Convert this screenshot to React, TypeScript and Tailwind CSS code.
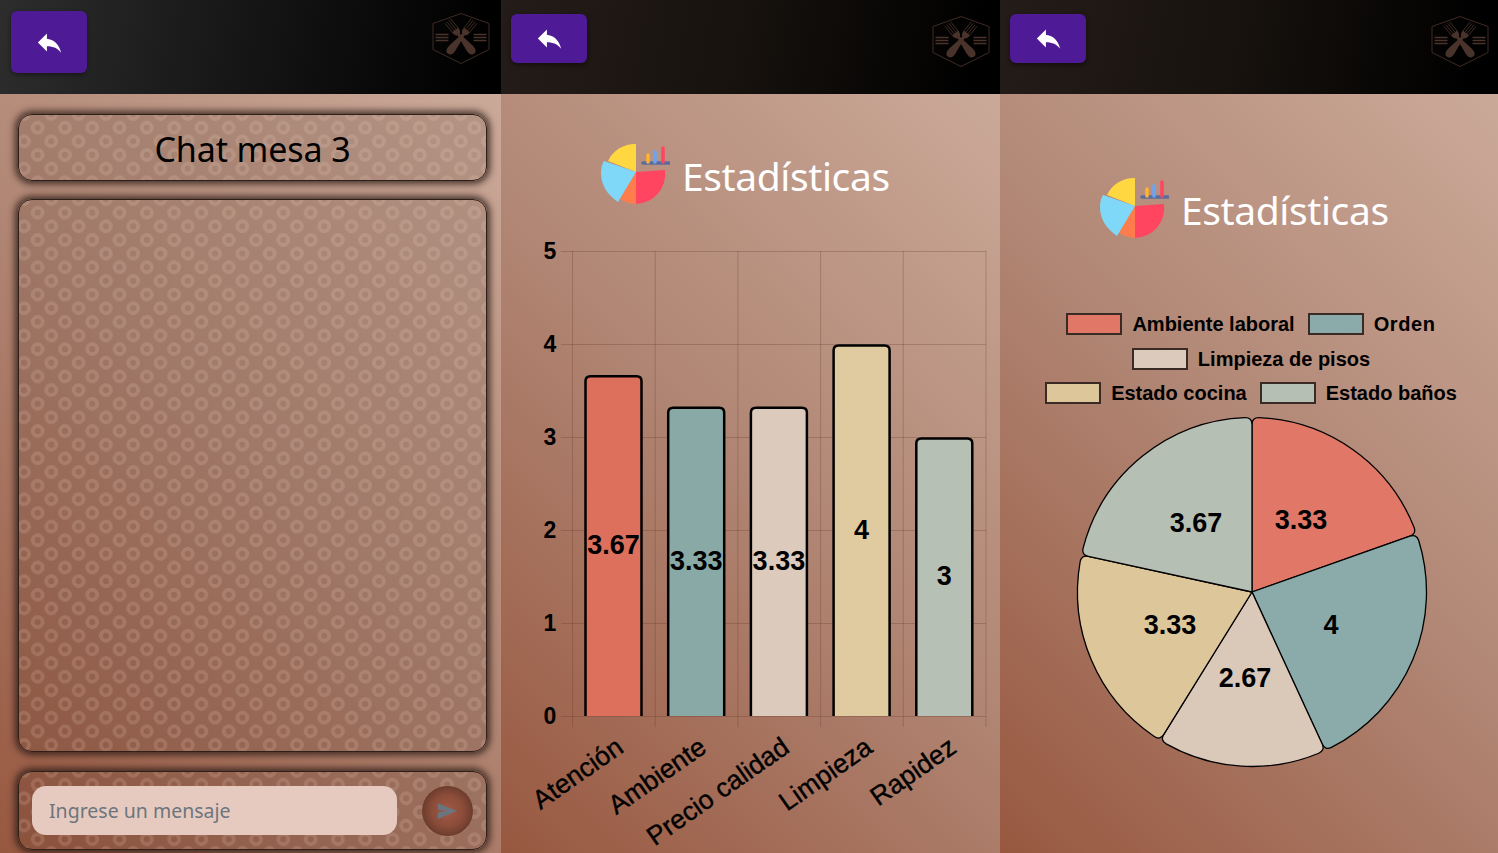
import React from "react";

const ring =
  "[background-image:radial-gradient(circle,transparent_3px,rgba(255,225,205,0.15)_3.4px,rgba(255,225,205,0.15)_6.5px,transparent_7px),radial-gradient(circle,transparent_3px,rgba(255,225,205,0.15)_3.4px,rgba(255,225,205,0.15)_6.5px,transparent_7px)] [background-size:27.3px_27.3px] [background-position:5px_-1px,18.65px_12.65px]";

const bodyBg = "bg-[linear-gradient(45deg,#985840_0%,#b08573_50%,#cba999_100%)]";

function Back() {
  return (
    <svg width="31" height="31" viewBox="0 0 24 24" className="block">
      <path d="M10 9V5l-7 7 7 7v-4.1c5 0 8.5 1.6 11 5.1-1-5-4-10-11-11z" fill="#fff" />
    </svg>
  );
}

function Fork({ angle }: { angle: number }) {
  return (
    <g transform={`translate(29 24.3) rotate(${angle})`} fill="#4a332b" stroke="none">
      <path d="M-3.6 -21V-9M-1.2 -21V-9M1.2 -21V-9M3.6 -21V-9" stroke="#4a332b" strokeWidth="0.8" fill="none" />
      <path d="M-4 -9.500 H4 Q4 -5 1.200 -3.500 L-1.200 -3.500 Q-4 -5 -4 -9.500 Z" />
      <path d="M-1.200 -5 L1.200 -5 L4 14 Q4.500 21 0 21 Q-4.500 21 -4 14 Z" />
    </g>
  );
}

function Logo() {
  return (
    <svg width="58" height="52" viewBox="0 0 58 52" fill="none" className="block">
      <path d="M29 0.500 L57 10.500 V36.500 L29 50.500 L1 36.500 V10.500 Z" stroke="#3e2b24" strokeWidth="1" />
      <path
        d="M3.500 21.500H16.500M3.500 24.500H16.500M3.500 27.500H16.500M41.500 21.500H54.500M41.500 24.500H54.500M41.500 27.500H54.500"
        stroke="#4a332b"
        strokeWidth="1.300"
      />
      <Fork angle={-39} />
      <Fork angle={39} />
    </svg>
  );
}

function Header({ big, slot, logoClass }: { big?: boolean; slot: string; logoClass: string }) {
  return (
    <div className={`h-[94px] shrink-0 flex items-start justify-between ${slot}`}>
      <button
        className={`w-[76px] ${big ? "h-[62px] mt-[11px] ml-[11px]" : "h-[49px] mt-[14px] ml-[10px]"} rounded-md bg-[#4f1a96] shadow-[0_2px_4px_rgba(0,0,0,0.4)] flex items-center justify-center`}
      >
        <Back />
      </button>
      <div className={logoClass}>
        <Logo />
      </div>
    </div>
  );
}

const cardClass = `rounded-[14px] border border-[#2e1f19] shadow-[0_0_7px_3px_rgba(40,25,20,0.8)] bg-[rgba(60,35,25,0.14)] ${ring}`;

function ChartIcon() {
  return (
    <svg width="70" height="62" viewBox="0 0 70 62" className="block shrink-0">
      <path d="M36 1 A30 30 0 0 0 8 18 L36 29 Z" fill="#ffd740" />
      <path d="M36 29 V61 A30 30 0 0 0 65 27 Z" fill="#ff4560" />
      <path d="M36 29 V61 A30 30 0 0 1 19 55 Z" fill="#ff7d4d" />
      <path d="M4 18 L36 29 L18 59 C8 52 1 43 1 30 C1 25 2 21 4 18 Z" fill="#7fd8f7" />
      <path d="M43 20H69" stroke="#5b6d9e" strokeWidth="3.500" strokeLinecap="round" />
      <path d="M48 19V12" stroke="#ffb32e" strokeWidth="3.500" strokeLinecap="round" />
      <path d="M55 19V9" stroke="#6aa5f5" strokeWidth="3.500" strokeLinecap="round" />
      <path d="M63 19V5" stroke="#ff4560" strokeWidth="3.500" strokeLinecap="round" />
    </svg>
  );
}

function Title({ className }: { className: string }) {
  return (
    <div className={`flex items-center ${className}`}>
      <ChartIcon />
      <span className="ml-[12px] pt-[2px] text-[39px] leading-none text-white [font-family:'Noto_Sans',sans-serif] tracking-[-0.4px]">
        Estadísticas
      </span>
    </div>
  );
}

const bars = [
  { n: "Atención", v: 3.67, c: "#dd6f5d", lx: 625, lab: "3.67" },
  { n: "Ambiente", v: 3.33, c: "#88a9a6", lx: 708, lab: "3.33" },
  { n: "Precio calidad", v: 3.33, c: "#dccbbc", lx: 791, lab: "3.33" },
  { n: "Limpieza", v: 4, c: "#e0ca9f", lx: 874, lab: "4" },
  { n: "Rapidez", v: 3, c: "#b6c0b4", lx: 958, lab: "3" },
];

function BarChart() {
  const x0 = 71;
  const step = 82.7;
  const y0 = 511;
  const yu = 93;
  const ox = 501;
  const grid = "rgba(95,55,40,0.28)";
  return (
    <svg width="499" height="648" className="block" style={{ fontFamily: "'Liberation Sans', Arial, sans-serif" }}>
      {[0, 1, 2, 3, 4, 5].map((i) => (
        <g key={i}>
          <path d={`M${x0 - 11} ${y0 - i * yu + 0.5}H485`} stroke={grid} strokeWidth="1" />
          <text x="49" y={y0 - i * yu + 8} textAnchor="middle" fontSize="23" fontWeight="700" fill="#000">
            {i}
          </text>
        </g>
      ))}
      {[0, 1, 2, 3, 4, 5].map((i) => (
        <path key={i} d={`M${x0 + i * step + 0.5} 46V522`} stroke={grid} strokeWidth="1" />
      ))}
      {bars.map((b, i) => {
        const x = x0 + 13.5 + i * step;
        const w = 56;
        const rawTop = y0 - b.v * yu;
        const top = rawTop + 1.5;
        return (
          <g key={b.n}>
            <path
              d={`M${x} ${y0} V${top + 5} Q${x} ${top} ${x + 5} ${top} H${x + w - 5} Q${x + w} ${top} ${x + w} ${top + 5} V${y0}`}
              fill={b.c}
              stroke="#000"
              strokeWidth="2.500"
            />
            <text x={x + w / 2} y={(rawTop + y0) / 2 + 8.5} textAnchor="middle" fontSize="27" fontWeight="700" fill="#000">
              {b.lab}
            </text>
            <text
              x={b.lx - ox}
              y={546}
              textAnchor="end"
              fontSize="26.500"
              fill="#000"
              transform={`rotate(-35 ${b.lx - ox} 546)`}
              style={{ fontWeight: 400, stroke: "#000", strokeWidth: 0.4 }}
            >
              {b.n}
            </text>
          </g>
        );
      })}
    </svg>
  );
}

function slice(cx: number, cy: number, r: number, a0: number, a1: number, rc: number) {
  const pt = (rad: number, a: number) => {
    const t = ((a - 90) * Math.PI) / 180;
    return `${(cx + rad * Math.cos(t)).toFixed(2)} ${(cy + rad * Math.sin(t)).toFixed(2)}`;
  };
  const da = (rc / r) * (180 / Math.PI);
  const large = a1 - a0 - 2 * da > 180 ? 1 : 0;
  return `M${cx} ${cy} L${pt(r - rc, a0)} Q${pt(r, a0)} ${pt(r, a0 + da)} A${r} ${r} 0 ${large} 1 ${pt(r, a1 - da)} Q${pt(r, a1)} ${pt(r - rc, a1)} Z`;
}

const pie = [
  { l: "3.33", v: 3.33, c: "#e07767", lx: 301, ly: 114 },
  { l: "4", v: 4, c: "#8aaba9", lx: 331, ly: 219 },
  { l: "2.67", v: 2.67, c: "#dac8b9", lx: 245, ly: 272 },
  { l: "3.33", v: 3.33, c: "#dec69b", lx: 170, ly: 219 },
  { l: "3.67", v: 3.67, c: "#b6bfb3", lx: 196, ly: 117 },
];

function Pie() {
  const total = 17;
  let a = 0;
  const cx = 252;
  const cy = 187;
  return (
    <svg width="498" height="365" className="block" style={{ fontFamily: "'Liberation Sans', Arial, sans-serif" }}>
      {pie.map((s, i) => {
        const a0 = a;
        a += (s.v / total) * 360;
        return <path key={i} d={slice(cx, cy, 174.5, a0, a, 7)} fill={s.c} stroke="#000" strokeWidth="1.300" strokeLinejoin="round" />;
      })}
      {pie.map((s, i) => (
        <text key={i} x={s.lx} y={s.ly + 10} textAnchor="middle" fontSize="27" fontWeight="700" fill="#000">
          {s.l}
        </text>
      ))}
    </svg>
  );
}

function Legend({ c, t, wide }: { c: string; t: string; wide?: boolean }) {
  return (
    <div className="flex items-center">
      <span className="w-[56px] h-[22px] border-2 border-[#3a2a24]" style={{ backgroundColor: c }} />
      <span
        className={`ml-[10px] text-[20px] leading-none font-bold text-black [font-family:'Liberation_Sans',Arial,sans-serif] ${wide ? "tracking-[0.6px]" : ""}`}
      >
        {t}
      </span>
    </div>
  );
}

export default function App() {
  return (
    <div className="w-[1498px] h-[853px] flex overflow-hidden">
      <section className="w-[501px] flex flex-col">
        <Header big slot="bg-[linear-gradient(100deg,#2d2d2d_0%,#1c1c1c_35%,#000_95%)]" logoClass="mt-[13px] mr-[11px]" />
        <div className={`flex-1 flex flex-col px-[18px] pt-[20px] ${bodyBg}`}>
          <div className={`h-[67px] w-[469px] flex items-center justify-center ${cardClass}`}>
            <span className="pt-[3px] text-[34px] leading-none text-black [font-family:'Noto_Sans',sans-serif] tracking-[-0.1px]">
              Chat mesa 3
            </span>
          </div>
          <div className={`mt-[18px] h-[553px] w-[469px] ${cardClass}`} />
          <div className={`mt-[19px] h-[79px] w-[469px] flex items-center pl-[13px] ${cardClass}`}>
            <div className="w-[365px] h-[49px] rounded-[14px] bg-[#e7cabf] flex items-center pl-[17px] text-[19.5px] text-[#6c757d] [font-family:'Noto_Sans',sans-serif]">
              Ingrese un mensaje
            </div>
            <div className="ml-[25px] w-[51px] h-[50px] rounded-full bg-[radial-gradient(circle,#a45a45_0%,#8a4c39_45%,#4a2a20_100%)] flex items-center justify-center">
              <svg width="21" height="18" viewBox="0 0 24 20">
                <path d="M1 1 L23 10 L1 19 V11.500 L12 10 L1 8.500 Z" fill="#6c757d" />
              </svg>
            </div>
          </div>
        </div>
      </section>

      <section className="w-[499px] flex flex-col">
        <Header slot="bg-[linear-gradient(100deg,#241c18_0%,#18130f_45%,#000_95%)]" logoClass="mt-[16px] mr-[10px]" />
        <div className={`flex-1 flex flex-col ${bodyBg}`}>
          <Title className="ml-[99px] mt-[49px] h-[62px]" />
          <BarChart />
        </div>
      </section>

      <section className="w-[498px] flex flex-col">
        <Header slot="bg-[linear-gradient(100deg,#241c18_0%,#18130f_45%,#000_95%)]" logoClass="mt-[16px] mr-[9px]" />
        <div className={`flex-1 flex flex-col ${bodyBg}`}>
          <Title className="ml-[99px] mt-[83px] h-[62px]" />
          <div className="mt-[74px] flex flex-col items-center gap-y-[12.500px] ml-[4px]">
            <div className="flex gap-x-[13px]">
              <Legend c="#e07767" t="Ambiente laboral" />
              <Legend c="#8aaba9" t="Orden" wide />
            </div>
            <div className="flex">
              <Legend c="#dccbbc" t="Limpieza de pisos" />
            </div>
            <div className="flex gap-x-[13px]">
              <Legend c="#dec69b" t="Estado cocina" />
              <Legend c="#b6bfb3" t="Estado baños" />
            </div>
          </div>
          <div className="mt-[1px]">
            <Pie />
          </div>
        </div>
      </section>
    </div>
  );
}
